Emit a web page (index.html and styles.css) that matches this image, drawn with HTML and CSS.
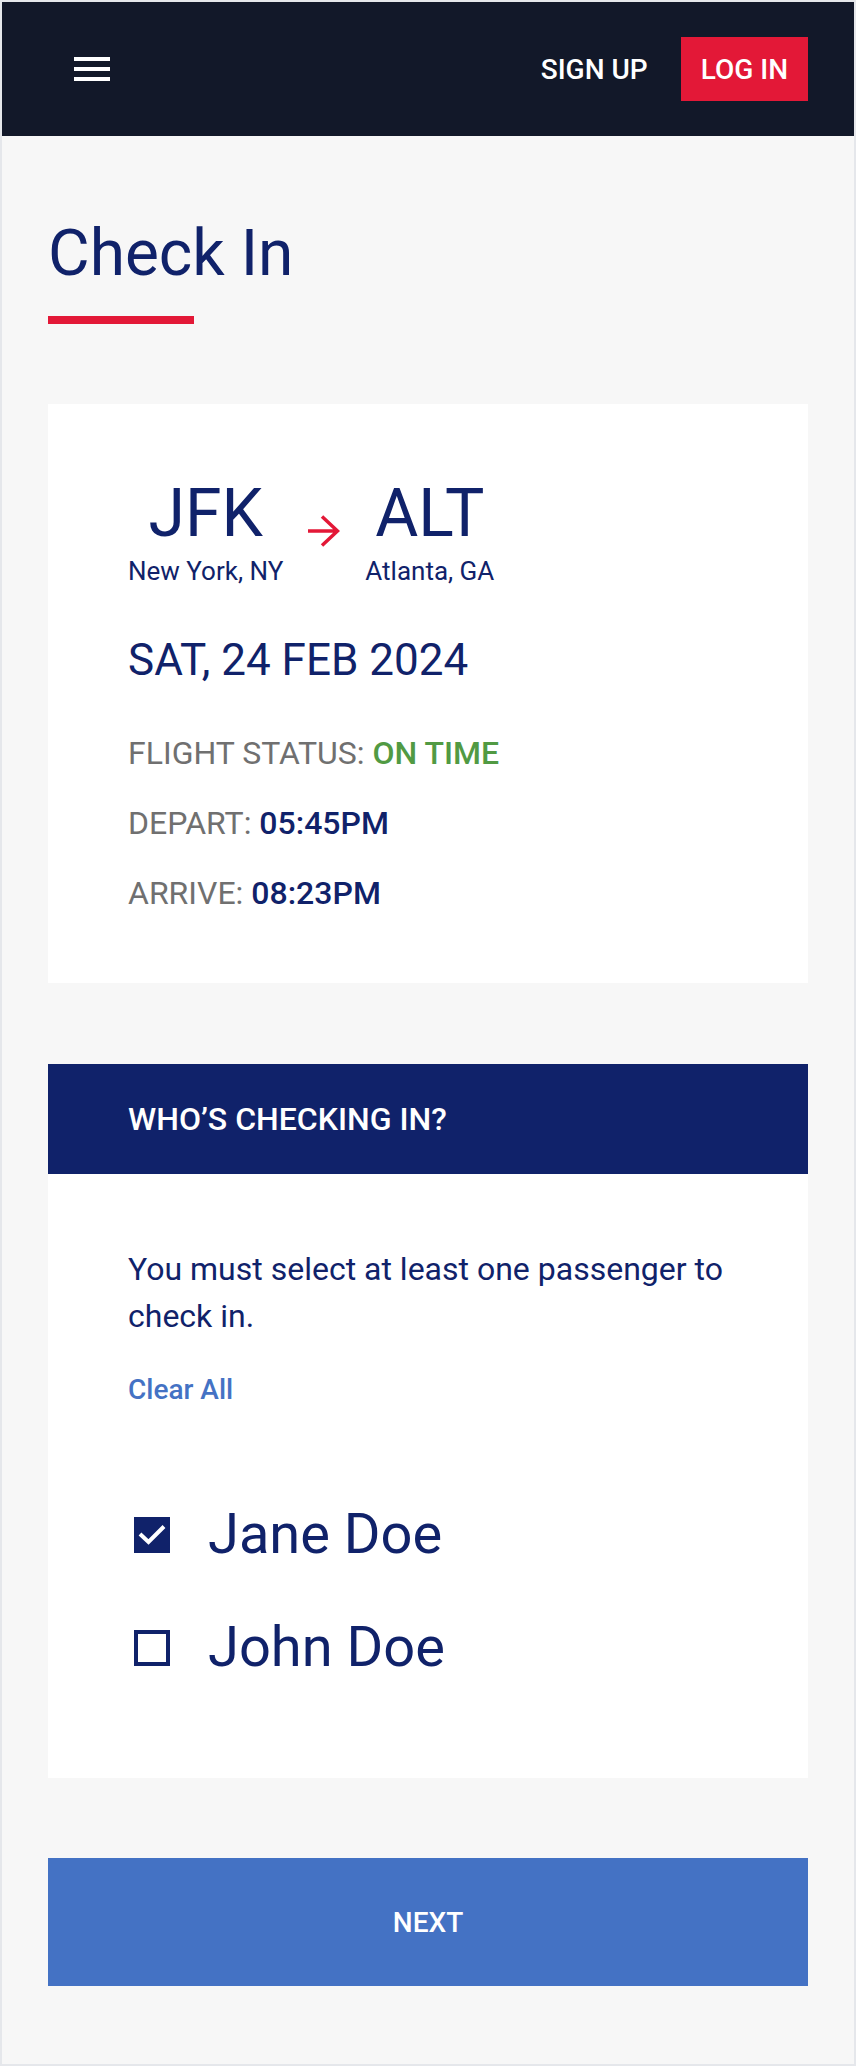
FILE: index.html
```html
<!DOCTYPE html>
<html lang="en">
<head>
    <meta charset="UTF-8">
    <meta name="viewport" content="width=device-width, initial-scale=1.0">
    <title>Check In</title>
    <link rel="stylesheet" href="styles.css">
</head>
<body>
    <nav class="topbar">
        <button class="menu-btn" aria-label="Menu">
            <span></span><span></span><span></span>
        </button>
        <div class="auth">
            <a href="#" class="signup">Sign up</a>
            <a href="#" class="login">Log in</a>
        </div>
    </nav>

    <main class="page">
        <h1 class="title">Check In</h1>
        <div class="title-bar"></div>

        <section class="card flight">
            <div class="route">
                <div class="airport">
                    <div class="code">JFK</div>
                    <div class="city">New York, NY</div>
                </div>
                <svg class="route-arrow" width="32" height="32" viewBox="0 0 32 32">
                    <path d="M0 16 H30 M14 1.5 L29.5 16 L14 30.5" fill="none" stroke="#e31837" stroke-width="3.5"/>
                </svg>
                <div class="airport">
                    <div class="code">ALT</div>
                    <div class="city">Atlanta, GA</div>
                </div>
            </div>
            <div class="date">SAT, 24 FEB 2024</div>
            <p class="info">FLIGHT STATUS: <strong class="ok">ON TIME</strong></p>
            <p class="info">DEPART: <strong>05:45PM</strong></p>
            <p class="info">ARRIVE: <strong>08:23PM</strong></p>
        </section>

        <section class="card passengers">
            <h2 class="card-head">Who’s checking in?</h2>
            <div class="card-body">
                <p class="hint">You must select at least one passenger to check in.</p>
                <a href="#" class="clear">Clear All</a>
                <ul class="pax-list">
                    <li class="pax">
                        <span class="box checked">
                            <svg width="36" height="36" viewBox="0 0 36 36">
                                <path d="M6 17 L14.5 25 L30 9.5" fill="none" stroke="#fff" stroke-width="4"/>
                            </svg>
                        </span>
                        Jane Doe
                    </li>
                    <li class="pax">
                        <span class="box"></span>
                        John Doe
                    </li>
                </ul>
            </div>
        </section>

        <button class="next-btn">Next</button>
    </main>
</body>
</html>
```

FILE: styles.css
```css
* {
    box-sizing: border-box;
}
body {
    margin: 0;
    border: 2px solid #e5e7eb;
    font-family: Roboto, "Liberation Sans", Arial, sans-serif;
    background-color: #f7f7f7;
    color: #10226a;
}
.topbar {
    height: 134px;
    background-color: #121829;
    display: flex;
    align-items: center;
    justify-content: space-between;
    padding: 0 46px 0 72px;
}
.menu-btn {
    display: flex;
    flex-direction: column;
    gap: 6px;
    width: 36px;
    padding: 0;
    background: none;
    border: none;
    cursor: pointer;
}
.menu-btn span {
    display: block;
    height: 4px;
    background-color: #fff;
}
.auth {
    display: flex;
    align-items: center;
    gap: 33px;
}
.auth a {
    color: #fff;
    text-decoration: none;
    text-transform: uppercase;
    font-size: 28px;
    font-weight: 500;
}
.login {
    display: flex;
    align-items: center;
    height: 64px;
    padding: 0 20px;
    background-color: #e31837;
}
.page {
    padding: 86px 46px 78px;
}
.title {
    margin: 0;
    font-size: 64px;
    line-height: 64px;
    font-weight: 400;
}
.title-bar {
    width: 146px;
    height: 8px;
    margin-top: 30px;
    background-color: #e31837;
}
.card {
    background-color: #fff;
    margin-top: 80px;
}
.flight {
    padding: 77px 80px 69px;
}
.route {
    display: flex;
    align-items: flex-start;
    gap: 25px;
}
.airport {
    text-align: center;
}
.code {
    font-size: 66px;
    line-height: 66px;
}
.city {
    margin-top: 9px;
    font-size: 26px;
    line-height: 30px;
}
.route-arrow {
    margin-top: 34px;
}
.date {
    margin-top: 48px;
    font-size: 44px;
    line-height: 52px;
}
.info {
    margin: 28px 0 0;
    font-size: 32px;
    line-height: 42px;
    color: #707070;
}
.date + .info {
    margin-top: 46px;
}
.info strong {
    font-weight: 500;
    color: #10226a;
}
.info strong.ok {
    color: #519a43;
}
.passengers {
    margin-top: 81px;
}
.card-head {
    margin: 0;
    height: 110px;
    display: flex;
    align-items: center;
    padding: 0 80px;
    background-color: #10226a;
    color: #fff;
    font-size: 32px;
    font-weight: 500;
    text-transform: uppercase;
}
.card-body {
    padding: 72px 80px 97px;
}
.hint {
    margin: 0;
    font-size: 32px;
    line-height: 47px;
}
.clear {
    display: block;
    margin-top: 30px;
    font-size: 28px;
    line-height: 40px;
    font-weight: 500;
    color: #4472c4;
    text-decoration: none;
}
.pax-list {
    list-style: none;
    margin: 91px 0 0;
    padding: 0;
}
.pax {
    display: flex;
    align-items: center;
    gap: 38px;
    font-size: 56px;
    line-height: 67px;
}
.pax + .pax {
    margin-top: 46px;
}
.box {
    width: 36px;
    height: 36px;
    margin-left: 6px;
    border: 4px solid #10226a;
    flex-shrink: 0;
}
.box.checked {
    border: none;
    background-color: #10226a;
}
.box svg {
    display: block;
}
.next-btn {
    display: block;
    width: 100%;
    height: 128px;
    margin-top: 80px;
    border: none;
    background-color: #4472c4;
    color: #fff;
    font-family: inherit;
    font-size: 28px;
    font-weight: 500;
    text-transform: uppercase;
    cursor: pointer;
}
```
